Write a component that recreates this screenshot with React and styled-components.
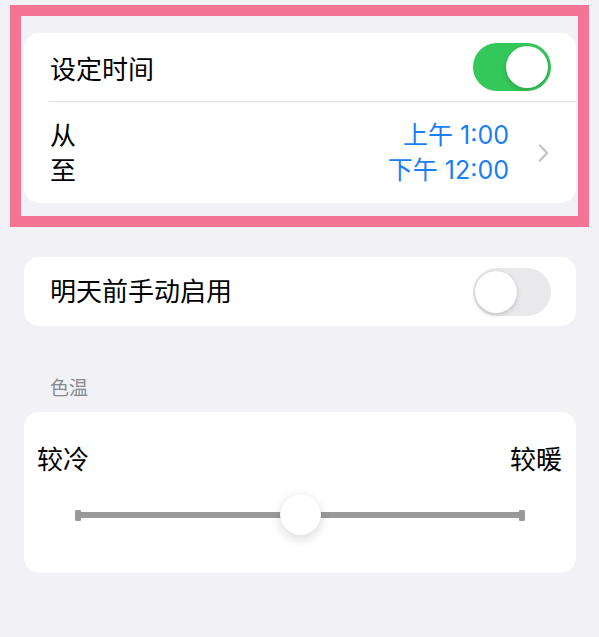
import React from "react";
import styled, { createGlobalStyle } from "styled-components";

const GlobalStyle = createGlobalStyle`
  html, body {
    margin: 0;
    padding: 0;
    background: #f1f1f6;
  }
  body {
    font-family: "Inter", "Noto Sans CJK SC", "Noto Sans", sans-serif;
    -webkit-font-smoothing: antialiased;
  }
`;

const Page = styled.div`
  position: relative;
  width: 599px;
  height: 637px;
  box-sizing: border-box;
  padding: 33px 23px 0 24px;
  display: flex;
  flex-direction: column;
  background: #f1f1f6;
  overflow: hidden;
`;

const Highlight = styled.div`
  position: absolute;
  left: 10px;
  top: 5px;
  width: 579px;
  height: 222px;
  box-sizing: border-box;
  border: 11px solid #f57395;
  pointer-events: none;
`;

const Card = styled.div`
  background: #ffffff;
  border-radius: 15px;
  margin-top: ${(p) => p.$gap || 0}px;
  overflow: hidden;
`;

const Row = styled.div`
  height: ${(p) => p.$h}px;
  box-sizing: border-box;
  padding: 0 25px 0 26px;
  display: flex;
  align-items: center;
  justify-content: space-between;
`;

const Separator = styled.div`
  height: 1px;
  margin-left: 25px;
  background: #e2e2e6;
`;

const Label = styled.span`
  font-size: 26px;
  line-height: 30px;
  margin-top: ${(p) => p.$drop || 0}px;
  color: #000;
`;

const Stack = styled.div`
  display: flex;
  flex-direction: column;
  align-items: ${(p) => (p.$end ? "flex-end" : "flex-start")};
  font-size: ${(p) => (p.$accent ? 25 : 26)}px;
  line-height: 35px;
  color: ${(p) => (p.$accent ? "#1a7ef5" : "#000")};
`;

const Trail = styled.div`
  display: flex;
  align-items: center;
  gap: 28px;
  padding-right: 1px;
`;

const Switch = styled.div`
  position: relative;
  width: 78px;
  height: 48px;
  border-radius: 24px;
  background: ${(p) => (p.$on ? "#34c759" : "#e9e9eb")};
  flex-shrink: 0;
`;

const Knob = styled.div`
  position: absolute;
  top: 3px;
  left: ${(p) => (p.$on ? "33px" : "2px")};
  width: 42px;
  height: 42px;
  border-radius: 50%;
  background: #fff;
  box-shadow: 0 2px 5px rgba(0, 0, 0, 0.16), 0 0 1px rgba(0, 0, 0, 0.12);
`;

const SectionTitle = styled.div`
  margin: 50px 0 0 26px;
  font-size: 19px;
  line-height: 26px;
  color: #8a8a8e;
`;

const SliderCard = styled(Card)`
  height: 161px;
  box-sizing: border-box;
  padding: 33px 14px 0 13px;
  margin-top: 10px;
`;

const Ends = styled.div`
  display: flex;
  justify-content: space-between;
  font-size: 26px;
  line-height: 30px;
  color: #000;
`;

const SliderBox = styled.div`
  position: relative;
  height: 42px;
  margin: 19px 37px 0 38px;
  display: flex;
  align-items: center;
`;

const Track = styled.div`
  position: relative;
  flex: 1;
  height: 6px;
  background: #9a9a9a;
`;

const Cap = styled.div`
  position: absolute;
  top: -2.5px;
  ${(p) => (p.$right ? "right: 0;" : "left: 0;")}
  width: 6px;
  height: 11px;
  border-radius: 1px;
  background: #9a9a9a;
`;

const Thumb = styled.div`
  position: absolute;
  top: 0;
  width: 41px;
  height: 41px;
  margin-left: -20px;
  border-radius: 50%;
  background: #fff;
  box-shadow: 0 4px 12px rgba(0, 0, 0, 0.14), 0 0 1px rgba(0, 0, 0, 0.1);
`;

const Chevron = () => (
  <svg width="13" height="20" viewBox="0 0 13 20" fill="none">
    <path
      d="M3 2.5 L10 10 L3 17.5"
      stroke="#c4c4c7"
      strokeWidth="2.4"
      strokeLinecap="round"
      strokeLinejoin="round"
    />
  </svg>
);

export default function App() {
  const value = 0.5;
  return (
    <>
      <GlobalStyle />
      <Page>
        <Card>
          <Row $h={68}>
            <Label $drop={5}>设定时间</Label>
            <Switch $on>
              <Knob $on />
            </Switch>
          </Row>
          <Separator />
          <Row $h={101}>
            <Stack>
              <span>从</span>
              <span>至</span>
            </Stack>
            <Trail>
              <Stack $end $accent>
                <span>上午 1:00</span>
                <span>下午 12:00</span>
              </Stack>
              <Chevron />
            </Trail>
          </Row>
        </Card>

        <Card $gap={54}>
          <Row $h={69}>
            <Label>明天前手动启用</Label>
            <Switch>
              <Knob />
            </Switch>
          </Row>
        </Card>

        <SectionTitle>色温</SectionTitle>

        <SliderCard>
          <Ends>
            <span>较冷</span>
            <span>较暖</span>
          </Ends>
          <SliderBox>
            <Track>
              <Cap />
              <Cap $right />
            </Track>
            <Thumb style={{ left: `${value * 100}%` }} />
          </SliderBox>
        </SliderCard>

        <Highlight />
      </Page>
    </>
  );
}
